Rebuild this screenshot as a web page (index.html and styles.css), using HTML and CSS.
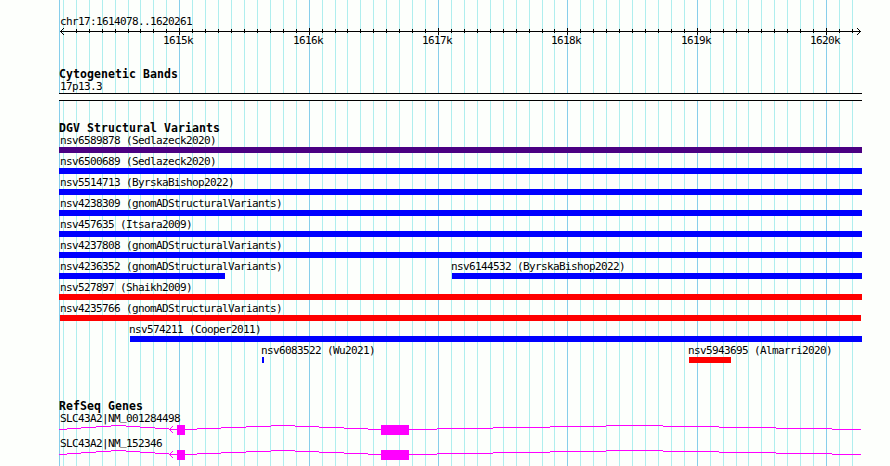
FILE: index.html
```
<!DOCTYPE html>
<html lang="en">
<head>
    <meta charset="UTF-8">
    <title>chr17:1614078..1620261</title>
    <link rel="stylesheet" href="styles.css">
</head>
<body>
    <div class="browser">
        <svg class="grid" id="grid" width="803" height="466"></svg>
        <section class="ruler">
            <div class="label">chr17:1614078..1620261</div>
            <svg class="axis" id="axis" width="803" height="26"></svg>
        </section>
        <section class="track cyto">
            <h2>Cytogenetic Bands</h2>
            <div class="label">17p13.3</div>
            <div class="band"></div>
        </section>
        <section class="track variants">
            <h2>DGV Structural Variants</h2>
            <div id="variants"></div>
        </section>
        <section class="track genes">
            <h2>RefSeq Genes</h2>
            <div id="genes"></div>
        </section>
    </div>
    <script src="script.js"></script>
</body>
</html>
```
FILE: styles.css
```
body {
    margin: 0;
    background-color: #fdfffc;
    color: #000;
    font-family: 'DejaVu Sans Mono', monospace;
    font-size: 11px;
    letter-spacing: -0.622px;
    overflow: hidden;
}
.browser {
    position: relative;
    width: 803px;
    height: 466px;
    margin-left: 59px;
    overflow: hidden;
}
svg {
    display: block;
    shape-rendering: crispEdges;
}
.grid {
    position: absolute;
    top: 0;
    left: 0;
}
.ruler, .track {
    position: relative;
}
.ruler {
    height: 68px;
    padding-top: 15px;
    box-sizing: border-box;
}
.axis {
    margin-top: -4px;
}
.label {
    height: 13px;
    line-height: 12px;
    padding: 1px 0 0 1px;
    box-sizing: border-box;
    white-space: pre;
}
/* keeps the underscore clear of the intron line below */
.underscore {
    line-height: 0;
    vertical-align: 2px;
}
h2 {
    margin: 0;
    height: 12px;
    line-height: 12px;
    font-size: 11.5px;
    letter-spacing: 0.077px;
    white-space: pre;
}
.cyto {
    height: 54px;
}
.band {
    height: 6px;
    border-top: 1px solid #000;
    border-bottom: 1px solid #000;
    background-color: #fdfffc;
}
.variants {
    height: 278px;
}
.row {
    display: grid;
    grid-template-columns: 803px;
    height: 21px;
}
.variant {
    grid-row: 1;
    grid-column: 1;
}
.bar {
    height: 6px;
}
.gain {
    background-color: #0000ff;
}
.loss {
    background-color: #ff0000;
}
.inversion {
    background-color: #4b0082;
}
.gene {
    height: 25px;
}
```
FILE: script.js
```
const START = 1614078;
const LENGTH = 6184;

function toX(pos) {
    return Math.round(1 + (pos - START) * 800 / LENGTH);
}

function drawRuler() {
    let lines = '<rect x="0" y="0" width="1" height="466" fill="#87ceeb"/>';
    let ticks = '<path d="M1 7.5H802M4.5 4v1M3.5 5v1M2.5 6v1M2.5 8v1M3.5 9v1M4.5 10v1M798.5 4v1M799.5 5v1M800.5 6v1M800.5 8v1M799.5 9v1M798.5 10v1" stroke="#000"/>';
    for (let pos = 1614100; pos <= 1620261; pos += 100) {
        const x = toX(pos);
        const major = pos % 1000 === 0;
        lines += `<rect x="${x}" y="0" width="1" height="466" fill="${major ? '#87ceeb' : '#afeeee'}"/>`;
        if (x > 6) {
            ticks += `<rect x="${x}" y="${major ? 4 : 5}" width="1" height="${major ? 7 : 4}"/>`;
        }
        if (major) {
            ticks += `<text x="${x - 16}" y="20">${pos / 1000}k</text>`;
        }
    }
    document.getElementById('grid').innerHTML = lines;
    document.getElementById('axis').innerHTML = ticks;
}

// each row holds one or more variants: [name, label x, bar start, bar end, type]
const rows = [
    [['nsv6589878 (Sedlazeck2020)', 0, 0, 803, 'inversion']],
    [['nsv6500689 (Sedlazeck2020)', 0, 0, 803, 'gain']],
    [['nsv5514713 (ByrskaBishop2022)', 0, 0, 803, 'gain']],
    [['nsv4238309 (gnomADStructuralVariants)', 0, 0, 803, 'gain']],
    [['nsv457635 (Itsara2009)', 0, 0, 803, 'gain']],
    [['nsv4237808 (gnomADStructuralVariants)', 0, 0, 803, 'gain']],
    [['nsv4236352 (gnomADStructuralVariants)', 0, 0, 166, 'gain'],
     ['nsv6144532 (ByrskaBishop2022)', 391, 393, 803, 'gain']],
    [['nsv527897 (Shaikh2009)', 0, 0, 803, 'loss']],
    [['nsv4235766 (gnomADStructuralVariants)', 0, 1, 802, 'loss']],
    [['nsv574211 (Cooper2011)', 69, 71, 803, 'gain']],
    [['nsv6083522 (Wu2021)', 201, 203, 205, 'gain'],
     ['nsv5943695 (Almarri2020)', 628, 630, 672, 'loss']]
];

function drawVariants() {
    document.getElementById('variants').innerHTML = rows.map(row => `
        <div class="row">${row.map(([name, labelX, from, to, type]) => `
            <div class="variant">
                <div class="label" style="margin-left: ${labelX}px">${name}</div>
                <div class="bar ${type}" style="margin-left: ${from}px; width: ${to - from}px"></div>
            </div>`).join('')}
        </div>`).join('');
}

// intron steps: [from, to, y]
const introns = [
    [0, 8, 5], [8, 22, 4], [22, 37, 3], [37, 52, 2], [52, 67, 1], [67, 81, 2],
    [81, 96, 3], [96, 110, 4], [110, 118, 5],
    [126, 138, 5], [138, 162, 4], [162, 187, 3], [187, 212, 2], [212, 236, 1],
    [236, 260, 2], [260, 285, 3], [285, 309, 4], [309, 322, 5],
    [350, 378, 5], [378, 434, 4], [434, 491, 3], [491, 547, 2], [547, 604, 1],
    [604, 660, 2], [660, 717, 3], [717, 773, 4], [773, 802, 5]
];

function drawGenes() {
    const genes = ['SLC43A2|NM_001284498', 'SLC43A2|NM_152346'];
    const steps = introns.map(([from, to, y]) => `M${from} ${y - 0.5}H${to}`).join('');
    document.getElementById('genes').innerHTML = genes.map(name => `
        <div class="gene">
            <div class="label">${name.replace('_', '<span class="underscore">_</span>')}</div>
            <svg width="803" height="12">
                <path d="${steps}" stroke="#ff00ff"/>
                <path d="M110 4.5h8M111.5 3v1M112.5 2v1M113.5 1v1M111.5 5v1M112.5 6v1M113.5 7v1" stroke="#ff00ff"/>
                <path d="M118 0h8v10h-8zM322 0h28v10h-28z" fill="#ff00ff"/>
            </svg>
        </div>`).join('');
}

drawRuler();
drawVariants();
drawGenes();
```
